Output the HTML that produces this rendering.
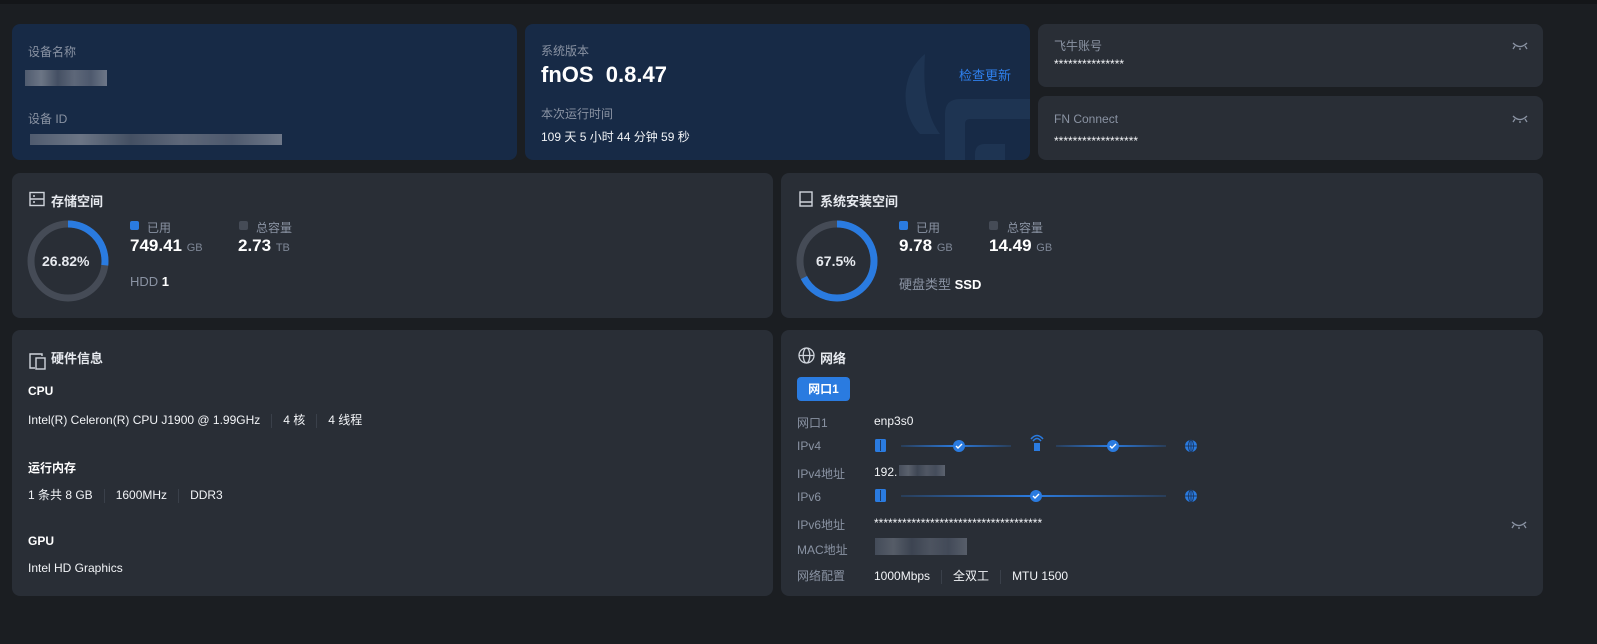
<!DOCTYPE html>
<html><head><meta charset="utf-8"><style>
*{margin:0;padding:0;box-sizing:border-box}
body{width:1597px;height:644px;background:#1b1e22;font-family:"Liberation Sans","Noto Sans CJK SC",sans-serif;color:#fff;position:relative;overflow:hidden;font-size:12px}
.top{position:absolute;left:0;top:0;width:1597px;height:4px;background:#141619}
.c{position:absolute;border-radius:8px;background:#292e36;overflow:hidden}
.b{background:#172a46}
.a{position:absolute;white-space:nowrap}
.l{color:#8a93a3;font-size:12px}
.t{font-size:13px;font-weight:bold;color:#e6e9ee}
.v{font-size:12px;color:#f2f4f7}
.big{font-size:17px;font-weight:bold}
.u{font-size:11px;color:#7e8796;font-weight:normal}
.sep{display:inline-block;width:1px;height:14px;background:#3a404a;vertical-align:middle;margin:0 11px}
.blur{position:absolute;background:linear-gradient(90deg,#5a6476,#7a8290,#4c5668,#6a7282,#576174,#7d8594);opacity:.85}
.eye{position:absolute;width:16px;height:8px}
</style></head><body>
<div class="top"></div>

<div class="c b" style="left:12px;top:24px;width:505px;height:136px">
<div class="a l" style="left:16px;top:19px">设备名称</div>
<div class="blur" style="left:13px;top:46px;width:82px;height:16px"></div>
<div class="a l" style="left:16px;top:86px">设备 ID</div>
<div class="blur" style="left:18px;top:110px;width:252px;height:11px"></div>
</div>

<div class="c b" style="left:525px;top:24px;width:505px;height:136px">
<svg style="position:absolute;left:370px;top:20px" width="140" height="120"><path d="M30 10 C5 30 5 70 25 90 L45 90 C30 70 28 40 30 10Z" fill="#1e3452"/><path d="M50 140 L50 70 Q50 55 65 55 L140 55 L140 75 L75 75 Q70 75 70 80 L70 140Z" fill="#1e3452"/><path d="M80 140 L80 110 Q80 100 90 100 L110 100 L110 140Z" fill="#1e3452"/></svg>
<div class="a l" style="left:16px;top:18px">系统版本</div>
<div class="a" style="left:16px;top:38px;font-size:22px;font-weight:bold">fnOS&nbsp; 0.8.47</div>
<div class="a" style="left:434px;top:41px;font-size:13px;color:#2f80ed">检查更新</div>
<div class="a l" style="left:16px;top:81px">本次运行时间</div>
<div class="a v" style="left:16px;top:104px">109 天 5 小时 44 分钟 59 秒</div>
</div>

<div class="c" style="left:1038px;top:24px;width:505px;height:63px">
<div class="a l" style="left:16px;top:13px">飞牛账号</div>
<div class="a v" style="left:16px;top:33px">***************</div>
<svg class="eye" style="left:474px;top:18px" viewBox="0 0 16 8"><path d="M1 1 Q8 8 15 1 M3 4 L1 7 M8 6 L8 8 M13 4 L15 7" stroke="#8a93a3" stroke-width="1.3" fill="none"/></svg>
</div>
<div class="c" style="left:1038px;top:96px;width:505px;height:64px">
<div class="a l" style="left:16px;top:16px">FN Connect</div>
<div class="a v" style="left:16px;top:38px">******************</div>
<svg class="eye" style="left:474px;top:19px" viewBox="0 0 16 8"><path d="M1 1 Q8 8 15 1 M3 4 L1 7 M8 6 L8 8 M13 4 L15 7" stroke="#8a93a3" stroke-width="1.3" fill="none"/></svg>
</div>

<div class="c" style="left:12px;top:173px;width:761px;height:145px">
<svg style="position:absolute;left:17px;top:18px" width="16" height="16" viewBox="0 0 16 16"><rect x="1" y="1.5" width="14" height="13" fill="none" stroke="#cfd4db" stroke-width="1.4"/><path d="M1 8 H15" stroke="#cfd4db" stroke-width="1.4"/><path d="M4 5 H6 M4 11 H6" stroke="#cfd4db" stroke-width="1.4"/></svg>
<div class="a t" style="left:39px;top:18px">存储空间</div>
<svg style="position:absolute;left:15px;top:46px" width="82" height="84" viewBox="0 0 82 84"><circle cx="41" cy="42" r="37" fill="none" stroke="#454b56" stroke-width="7"/><circle cx="41" cy="42" r="37" fill="none" stroke="#2a7be0" stroke-width="7" stroke-dasharray="62.35 300" transform="rotate(-90 41 42)"/></svg>
<div class="a" style="left:30px;top:80px;font-size:14px;font-weight:bold;color:#e6e9ee">26.82%</div>
<div class="a" style="left:118px;top:48px;width:9px;height:9px;background:#2a7be0;border-radius:2px"></div>
<div class="a l" style="left:135px;top:46px">已用</div>
<div class="a big" style="left:118px;top:63px">749.41 <span class="u">GB</span></div>
<div class="a" style="left:227px;top:48px;width:9px;height:9px;background:#454b56;border-radius:2px"></div>
<div class="a l" style="left:244px;top:46px">总容量</div>
<div class="a big" style="left:226px;top:63px">2.73 <span class="u">TB</span></div>
<div class="a" style="left:118px;top:101px;font-size:13px;color:#8a93a3">HDD <b style="color:#fff">1</b></div>
</div>

<div class="c" style="left:781px;top:173px;width:762px;height:145px">
<svg style="position:absolute;left:17px;top:18px" width="16" height="16" viewBox="0 0 16 16"><rect x="2" y="1" width="12" height="14" fill="none" stroke="#cfd4db" stroke-width="1.4"/><path d="M2 11 H14" stroke="#cfd4db" stroke-width="1.4"/></svg>
<div class="a t" style="left:39px;top:18px">系统安装空间</div>
<svg style="position:absolute;left:15px;top:46px" width="82" height="84" viewBox="0 0 82 84"><circle cx="41" cy="42" r="37" fill="none" stroke="#454b56" stroke-width="7"/><circle cx="41" cy="42" r="37" fill="none" stroke="#2a7be0" stroke-width="7" stroke-dasharray="156.9 300" transform="rotate(-90 41 42)"/></svg>
<div class="a" style="left:35px;top:80px;font-size:14px;font-weight:bold;color:#e6e9ee">67.5%</div>
<div class="a" style="left:118px;top:48px;width:9px;height:9px;background:#2a7be0;border-radius:2px"></div>
<div class="a l" style="left:135px;top:46px">已用</div>
<div class="a big" style="left:118px;top:63px">9.78 <span class="u">GB</span></div>
<div class="a" style="left:208px;top:48px;width:9px;height:9px;background:#454b56;border-radius:2px"></div>
<div class="a l" style="left:226px;top:46px">总容量</div>
<div class="a big" style="left:208px;top:63px">14.49 <span class="u">GB</span></div>
<div class="a" style="left:118px;top:101px;font-size:13px;color:#8a93a3">硬盘类型 <b style="color:#fff">SSD</b></div>
</div>

<div class="c" style="left:12px;top:330px;width:761px;height:266px">
<svg style="position:absolute;left:17px;top:23px" width="18" height="17" viewBox="0 0 18 17"><path d="M13 3 V1 H1 V15 H6" fill="none" stroke="#cfd4db" stroke-width="1.4"/><rect x="7" y="5" width="9" height="11" fill="none" stroke="#cfd4db" stroke-width="1.4"/></svg>
<div class="a t" style="left:39px;top:18px">硬件信息</div>
<div class="a" style="left:16px;top:54px;font-weight:bold;font-size:12px">CPU</div>
<div class="a v" style="left:16px;top:81px">Intel(R) Celeron(R) CPU J1900 @ 1.99GHz<span class="sep"></span>4 核<span class="sep"></span>4 线程</div>
<div class="a" style="left:16px;top:129px;font-weight:bold;font-size:12px">运行内存</div>
<div class="a v" style="left:16px;top:156px">1 条共 8 GB<span class="sep"></span>1600MHz<span class="sep"></span>DDR3</div>
<div class="a" style="left:16px;top:204px;font-weight:bold;font-size:12px">GPU</div>
<div class="a v" style="left:16px;top:231px">Intel HD Graphics</div>
</div>

<div class="c" style="left:781px;top:330px;width:762px;height:266px">
<svg style="position:absolute;left:17px;top:17px" width="17" height="17" viewBox="0 0 17 17"><g fill="none" stroke="#cfd4db" stroke-width="1.3"><circle cx="8.5" cy="8.5" r="7.5"/><ellipse cx="8.5" cy="8.5" rx="3.3" ry="7.5"/><path d="M1 8.5 H16"/></g></svg>
<div class="a t" style="left:39px;top:18px">网络</div>
<div class="a" style="left:16px;top:47px;width:53px;height:24px;background:#2a7be0;border-radius:4px;font-size:12px;font-weight:bold;text-align:center;line-height:24px">网口1</div>
<div class="a l" style="left:16px;top:84px">网口1</div><div class="a v" style="left:93px;top:84px">enp3s0</div>
<div class="a l" style="left:16px;top:109px">IPv4</div>
<div class="a l" style="left:16px;top:135px">IPv4地址</div><div class="a v" style="left:93px;top:135px">192.</div>
<div class="blur" style="left:118px;top:135px;width:46px;height:11px;opacity:.6"></div>
<div class="a l" style="left:16px;top:160px">IPv6</div>
<div class="a l" style="left:16px;top:186px">IPv6地址</div><div class="a v" style="left:93px;top:186px">************************************</div>
<svg class="eye" style="left:730px;top:191px" viewBox="0 0 16 8"><path d="M1 1 Q8 8 15 1 M3 4 L1 7 M8 6 L8 8 M13 4 L15 7" stroke="#8a93a3" stroke-width="1.3" fill="none"/></svg>
<div class="a l" style="left:16px;top:211px">MAC地址</div>
<div class="blur" style="left:94px;top:208px;width:92px;height:17px;opacity:.55"></div>
<div class="a l" style="left:16px;top:237px">网络配置</div><div class="a v" style="left:93px;top:237px">1000Mbps<span class="sep"></span>全双工<span class="sep"></span>MTU 1500</div>
<svg style="position:absolute;left:90px;top:104px" width="330" height="70" viewBox="0 0 330 70">
<defs><linearGradient id="g" x1="0" x2="1"><stop offset="0" stop-color="#2a7be0" stop-opacity=".2"/><stop offset=".5" stop-color="#2a7be0"/><stop offset="1" stop-color="#2a7be0" stop-opacity=".2"/></linearGradient></defs>
<g fill="#2a7be0">
<rect x="4" y="5" width="11" height="13" rx="1.5"/><rect x="4" y="55" width="11" height="13" rx="1.5"/>
<path d="M163 9 h6 v8 h-6z"/>
</g>
<g stroke="#1b3a66" stroke-width="1"><path d="M9.5 6 V17 M9.5 56 V67"/></g>
<path d="M162 7 Q166 2 170 7 M160 5 Q166 -2 172 5" stroke="#2a7be0" stroke-width="1.5" fill="none"/>
<rect x="30" y="11" width="110" height="2" fill="url(#g)"/>
<rect x="185" y="11" width="110" height="2" fill="url(#g)"/>
<rect x="30" y="61" width="265" height="2" fill="url(#g)"/>
<g fill="#2a7be0"><circle cx="88" cy="12" r="6"/><circle cx="242" cy="12" r="6"/><circle cx="165" cy="62" r="6"/><circle cx="320" cy="12" r="6"/><circle cx="320" cy="62" r="6"/></g>
<g stroke="#fff" stroke-width="1.4" fill="none"><path d="M85 12 l2 2 l4 -4 M239 12 l2 2 l4 -4 M162 62 l2 2 l4 -4"/></g>
<g stroke="#1b3a66" stroke-width="1" fill="none"><path d="M314 12 H326 M320 6 V18 M314 62 H326 M320 56 V68"/><ellipse cx="320" cy="12" rx="2.5" ry="6"/><ellipse cx="320" cy="62" rx="2.5" ry="6"/></g>
</svg>
</div>
</body></html>
